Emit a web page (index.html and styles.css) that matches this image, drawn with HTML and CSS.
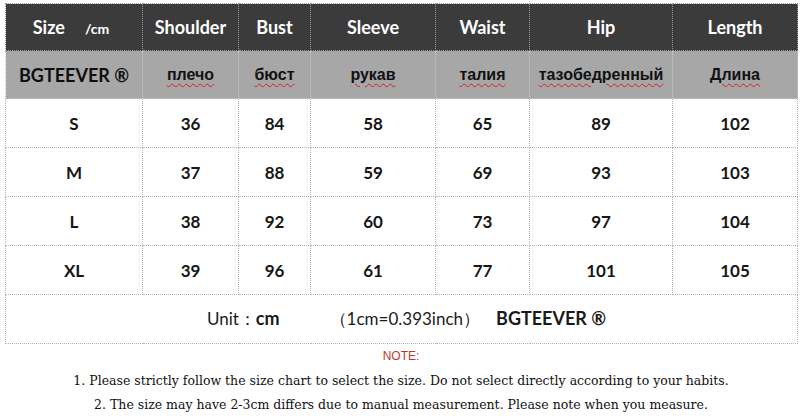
FILE: index.html
```html
<!DOCTYPE html>
<html>
<head>
<meta charset="utf-8">
<link rel="stylesheet" href="styles.css">
</head>
<body>
<div class="page">
  <table class="chart">
    <colgroup>
      <col class="c1"><col class="c2"><col class="c3"><col class="c4"><col class="c5"><col class="c6"><col class="c7">
    </colgroup>
    <thead>
      <tr class="head">
        <th class="first"><span class="size">Size</span><span class="cm">/cm</span></th>
        <th>Shoulder</th><th>Bust</th><th>Sleeve</th><th>Waist</th><th>Hip</th><th>Length</th>
      </tr>
      <tr class="ru">
        <th class="brand">BGTEEVER ®</th>
        <th><span class="wavy">плечо</span></th>
        <th><span class="wavy">бюст</span></th>
        <th><span class="wavy">рукав</span></th>
        <th><span class="wavy">талия</span></th>
        <th><span class="wavy">тазобедренный</span></th>
        <th><span class="wavy">Длина</span></th>
      </tr>
    </thead>
    <tbody>
      <tr><td>S</td><td>36</td><td>84</td><td>58</td><td>65</td><td>89</td><td>102</td></tr>
      <tr><td>M</td><td>37</td><td>88</td><td>59</td><td>69</td><td>93</td><td>103</td></tr>
      <tr><td>L</td><td>38</td><td>92</td><td>60</td><td>73</td><td>97</td><td>104</td></tr>
      <tr><td>XL</td><td>39</td><td>96</td><td>61</td><td>77</td><td>101</td><td>105</td></tr>
      <tr class="unit">
        <td colspan="7"><span class="ulabel">Unit：</span><b class="ucm">cm</b><span class="conv">（1cm=0.393inch）</span><b class="ubrand">BGTEEVER ®</b></td>
      </tr>
    </tbody>
  </table>
  <div class="notes">
    <p class="note-title">NOTE:</p>
    <p class="note">1. Please strictly follow the size chart to select the size. Do not select directly according to your habits.</p>
    <p class="note">2. The size may have 2-3cm differs due to manual measurement. Please note when you measure.</p>
  </div>
</div>
</body>
</html>
```

FILE: styles.css
```css
html, body {
  margin: 0;
  padding: 0;
  background: #ffffff;
}
.page {
  width: 800px;
  height: 416px;
  padding: 3px 0 0 5px;
  box-sizing: border-box;
  overflow: hidden;
}
.chart {
  border-collapse: collapse;
  table-layout: fixed;
  width: 792px;
  font-family: Lato, "Open Sans", sans-serif;
}
.c1 { width: 137px; }
.c2 { width: 96px; }
.c3 { width: 72px; }
.c4 { width: 125px; }
.c5 { width: 94px; }
.c6 { width: 143px; }
.c7 { width: 125px; }
.chart th, .chart td {
  padding: 0;
  text-align: center;
  vertical-align: middle;
  border: 1px dotted #b4b4b4;
}
.head th {
  height: 46px;
  background: #3b3b3b;
  color: #ffffff;
  font-size: 18px;
  font-weight: 700;
  border-color: #9a9a9a;
}
.head .first { padding-right: 6px; }
.head .size { margin-right: 20px; }
.head .cm { font-size: 14px; font-weight: 700; }
.ru th {
  height: 47px;
  background: #a7a7a7;
  color: #111111;
  font-family: "Liberation Sans", Arial, sans-serif;
  font-size: 16px;
  font-weight: 700;
  border-color: #c8c8c8;
}
.ru .brand {
  font-family: Lato, "Open Sans", sans-serif;
  font-size: 18px;
  color: #0e0e0e;
}
.wavy {
  text-decoration: underline wavy #d22020;
  text-decoration-thickness: 1px;
  text-underline-offset: 3px;
}
tbody td {
  height: 48px;
  font-size: 17px;
  font-weight: 700;
  color: #161616;
  background: #ffffff;
}
.unit td {
  height: 48px;
  font-weight: 400;
  font-size: 17px;
  color: #1a1a1a;
  padding-left: 10px;
}
.ulabel { font-weight: 400; }
.ucm { font-weight: 700; font-size: 18px; margin-right: 50px; }
.conv { font-weight: 400; margin-right: 16px; }
.ubrand { font-weight: 700; font-size: 18px; }
.notes {
  width: 792px;
  text-align: center;
  font-family: "DejaVu Serif", serif;
}
.notes p { margin: 0; }
.note-title {
  font-family: "Liberation Sans", Arial, sans-serif;
  font-size: 12px;
  color: #c0392b;
  padding-top: 5px;
  line-height: 15px;
  padding-bottom: 5px;
}
.note {
  font-size: 12.5px;
  color: #111111;
  line-height: 24px;
}
```
